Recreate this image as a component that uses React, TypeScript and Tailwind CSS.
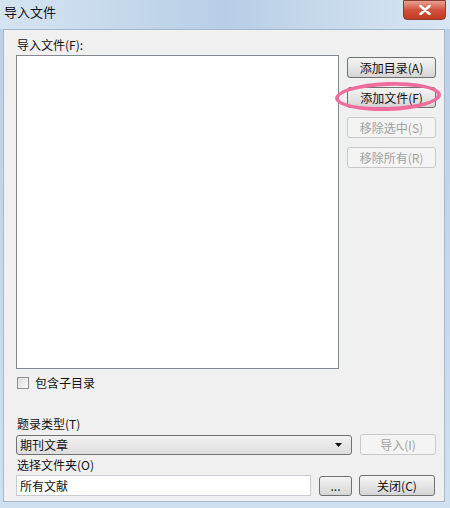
import React from "react"

const font = { fontFamily: '"Noto Sans CJK SC", "Noto Sans", sans-serif' }

const Btn = ({ label, disabled }: { label: string; disabled?: boolean }) => (
  <button
    className={
      disabled
        ? "w-[89px] h-[21px] rounded-[3px] border border-[#c9c9c9] bg-[#f4f4f4] text-[12px] leading-none text-[#a0a0a0] flex items-center justify-center"
        : "w-[89px] h-[21px] rounded-[3px] border border-[#707070] bg-gradient-to-b from-[#f4f4f4] via-[#e6e6e6] to-[#d4d4d4] text-[12px] leading-none text-[#111] flex items-center justify-center"
    }
  >
    {label}
  </button>
)

export default function App() {
  return (
    <div
      className="relative w-[450px] h-[508px] bg-gradient-to-b from-[#b9cfe6] to-[#cfe0f1] flex flex-col overflow-hidden"
      style={font}
    >
      {/* title bar */}
      <div className="h-[29px] flex items-start justify-between bg-gradient-to-r from-[#d5e4f2] via-[#b8cee6] to-[#d9e6f3]">
        <span className="pl-[4px] pt-[5px] text-[13px] leading-none text-[#111]">导入文件</span>
        <div className="mr-[4px] w-[43px] h-[20px] rounded-b-[4px] border border-[#8c3b30] bg-gradient-to-b from-[#e6a193] via-[#d0513b] to-[#c23a22] flex items-center justify-center">
          <svg width="12" height="10" viewBox="0 0 12 10">
            <path d="M1.5 1 L10.5 9 M10.5 1 L1.5 9" stroke="#fff" strokeWidth="2.6" strokeLinecap="round" />
          </svg>
        </div>
      </div>

      {/* panel */}
      <div className="ml-[3px] mr-[5px] h-[473px] border border-[#a5b7cb] bg-[#f0f0f0] flex flex-col pl-[12px] pr-[8px]">
        <div className="pt-[9px] h-[25px] text-[12px] leading-none text-[#111] pl-[1px]">导入文件(F):</div>
        <div className="flex gap-[8px]">
          <div className="w-[324px] h-[314px] border border-[#828790] bg-white"></div>
          <div className="flex flex-col gap-[9px] pt-[2px]">
            <Btn label="添加目录(A)" />
            <Btn label="添加文件(F)" />
            <Btn label="移除选中(S)" disabled />
            <Btn label="移除所有(R)" disabled />
          </div>
        </div>
        <div className="mt-[8px] flex items-center gap-[6px] pl-[1px]">
          <div className="w-[12px] h-[12px] border border-[#8e8f8f] bg-gradient-to-br from-[#dcdcdc] to-[#fafafa]"></div>
          <span className="text-[12px] leading-none text-[#111]">包含子目录</span>
        </div>
        <div className="mt-[29px] h-[16px] text-[12px] leading-none text-[#111] pl-[1px]">题录类型(T)</div>
        <div className="flex gap-[8px] items-center">
          <div className="w-[336px] h-[20px] rounded-[3px] border border-[#707070] bg-gradient-to-b from-[#f2f2f2] to-[#dddddd] flex items-center justify-between pl-[3px] pr-[9px]">
            <span className="text-[12px] leading-none text-[#111]">期刊文章</span>
            <svg width="7" height="4" viewBox="0 0 7 4">
              <path d="M0 0 H7 L3.5 4 Z" fill="#111" />
            </svg>
          </div>
          <div className="w-[76px] h-[21px] rounded-[3px] border border-[#c9c9c9] bg-[#f4f4f4] text-[12px] leading-none text-[#a0a0a0] flex items-center justify-center">
            导入(I)
          </div>
        </div>
        <div className="mt-[4px] h-[16px] text-[12px] leading-none text-[#111] pl-[1px]">选择文件夹(O)</div>
        <div className="flex items-center">
          <div className="w-[295px] h-[21px] border border-[#c9cdd3] bg-white flex items-center pl-[3px]">
            <span className="text-[12px] leading-none text-[#111]">所有文献</span>
          </div>
          <div className="ml-[8px] w-[33px] h-[20px] rounded-[3px] border border-[#707070] bg-gradient-to-b from-[#f4f4f4] to-[#d6d6d6] text-[12px] leading-none text-[#222] flex items-center justify-center">
            ...
          </div>
          <div className="ml-[7px] w-[76px] h-[21px] rounded-[3px] border border-[#707070] bg-gradient-to-b from-[#f4f4f4] via-[#e6e6e6] to-[#d4d4d4] text-[12px] leading-none text-[#111] flex items-center justify-center">
            关闭(C)
          </div>
        </div>
      </div>

      {/* highlight ring */}
      <div className="absolute left-[335px] top-[82px] w-[106px] h-[29px] rounded-[50%] border-[4px] border-[#ef6c9d] -rotate-2"></div>
    </div>
  )
}
